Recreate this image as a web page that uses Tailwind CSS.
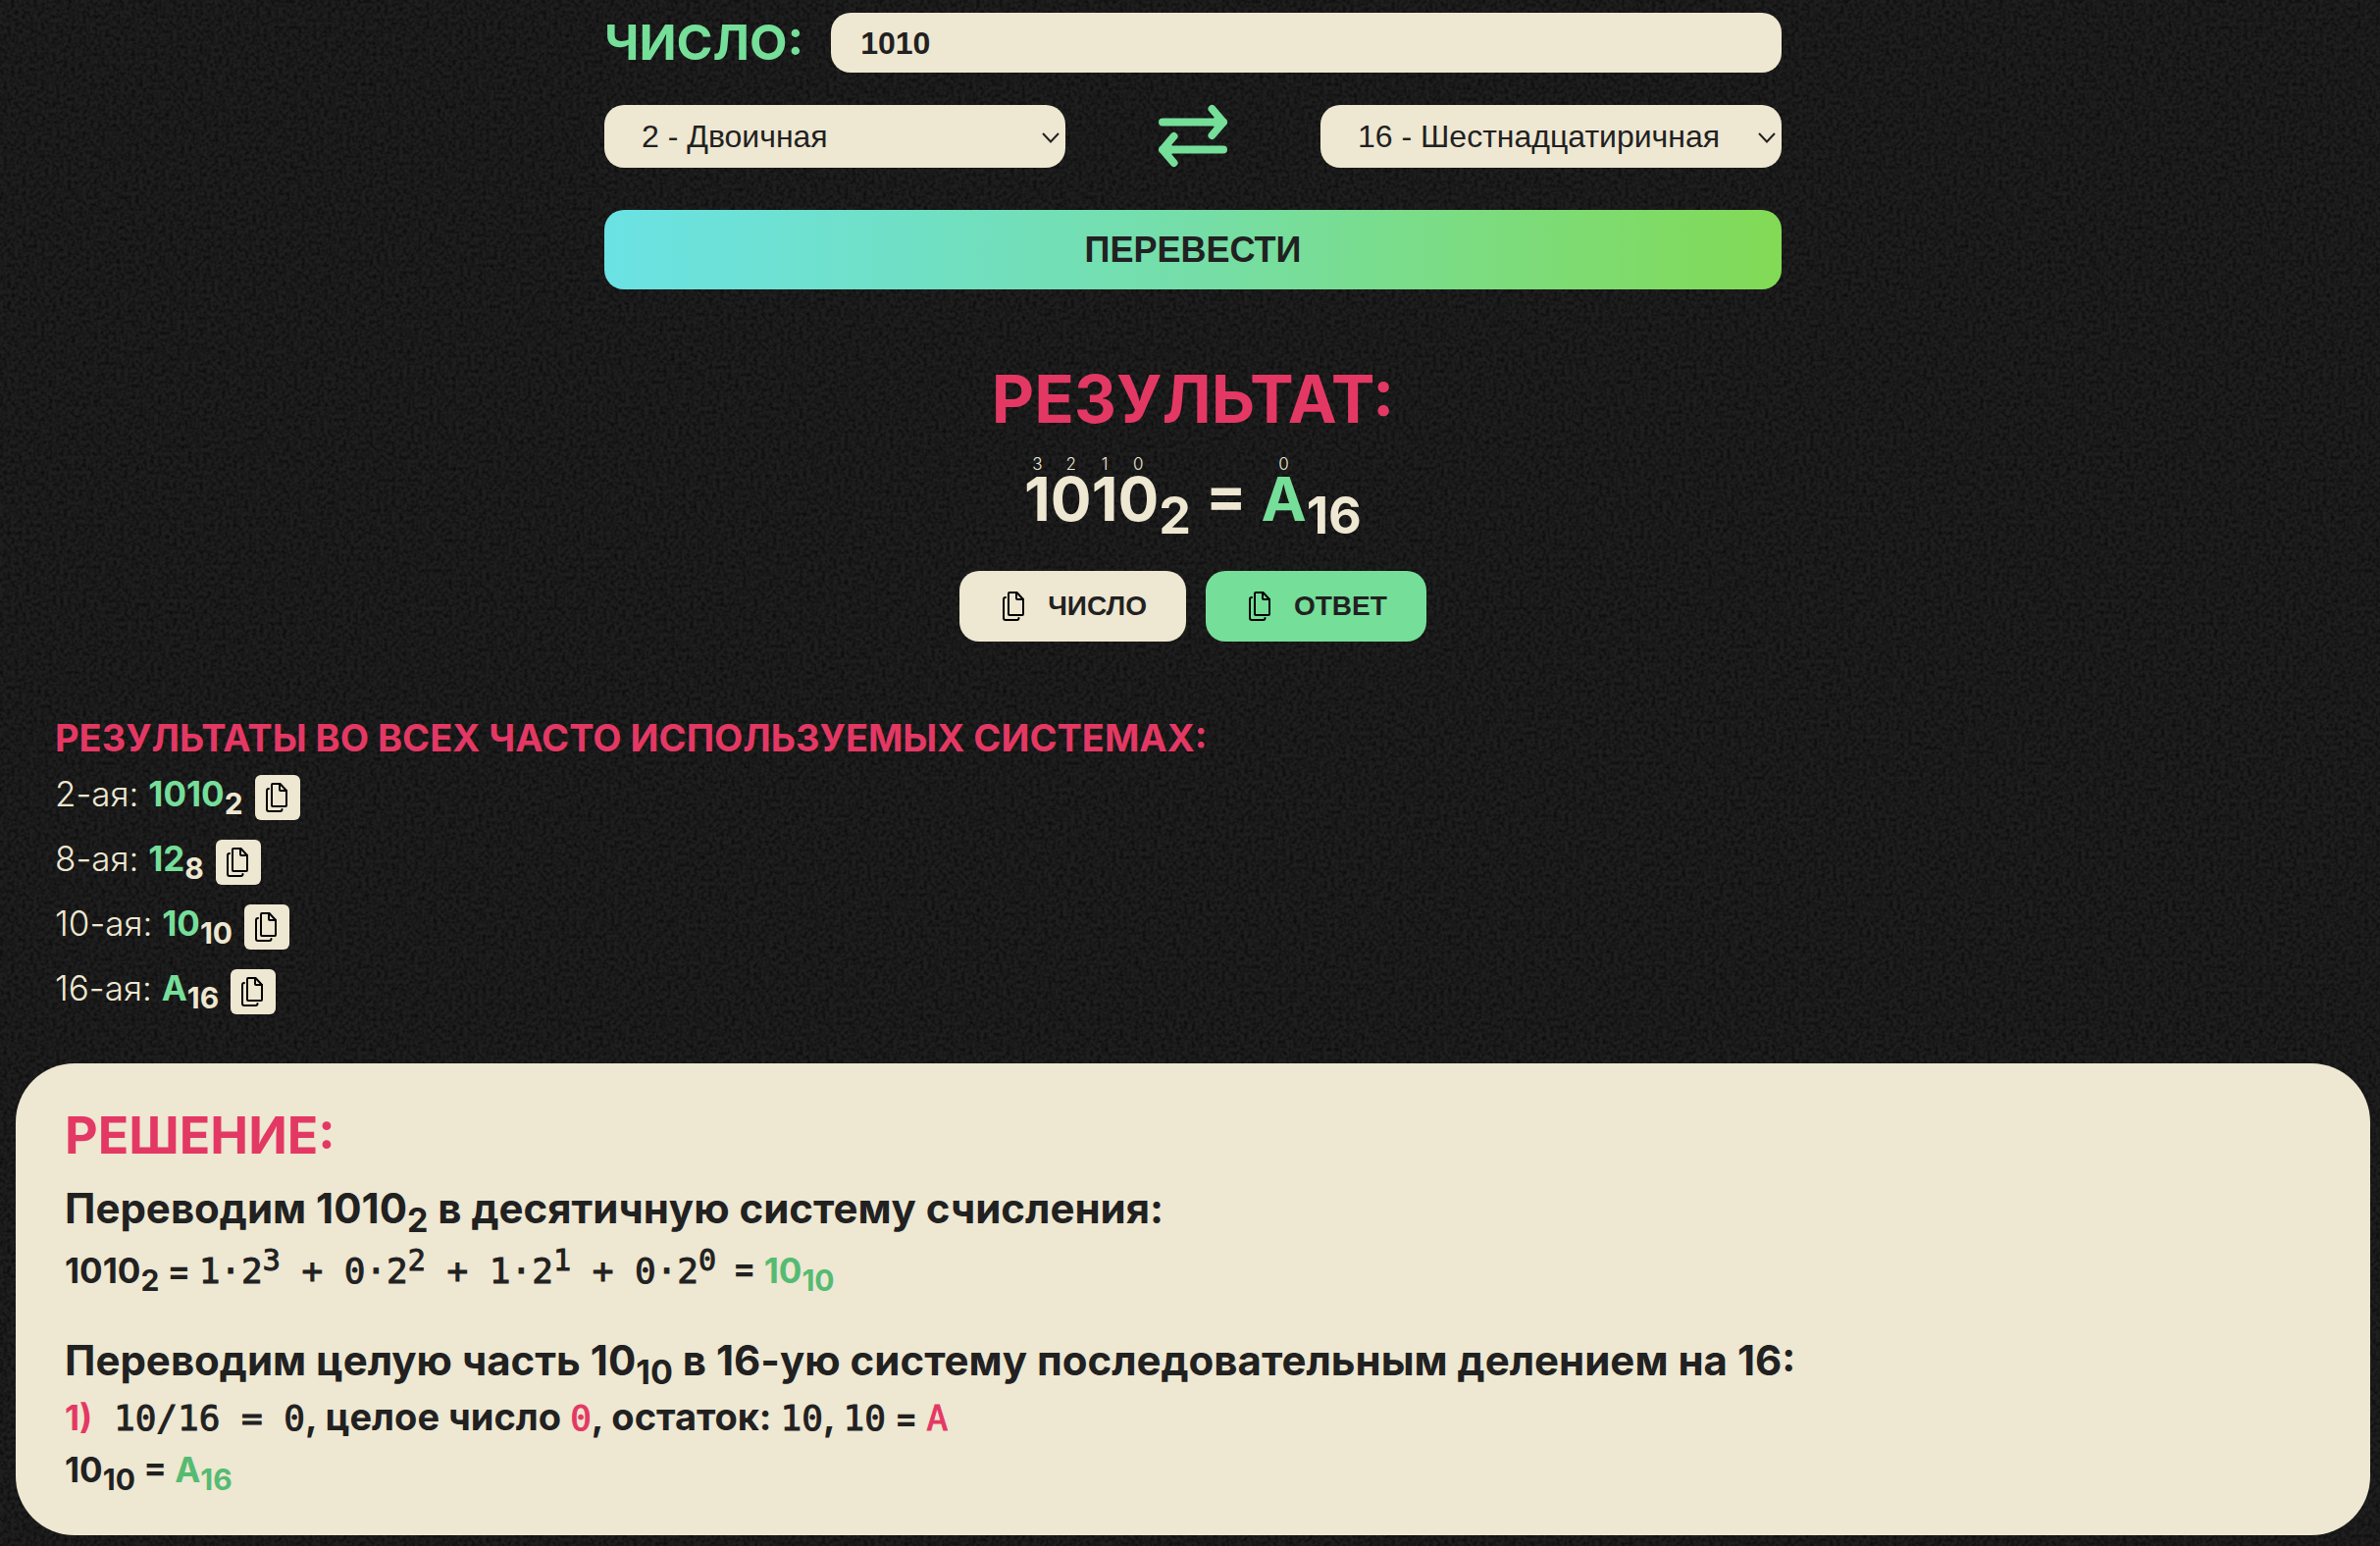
<!DOCTYPE html>
<html lang="ru">
<head>
<meta charset="utf-8">
<meta name="viewport" content="width=device-width, initial-scale=1">
<title>Перевод систем счисления</title>
<script src="https://cdn.jsdelivr.net/npm/@tailwindcss/browser@4"></script>
</head>
<body class="relative isolate min-h-screen overflow-x-hidden bg-[#1f1f1f] font-['Inter',sans-serif] text-[#eee7d1]">

<!-- grain over the dark background -->
<svg class="absolute inset-0 -z-10 h-full w-full" aria-hidden="true">
  <filter id="grain" x="0" y="0" width="100%" height="100%" color-interpolation-filters="sRGB">
    <feTurbulence type="fractalNoise" baseFrequency="0.26" numOctaves="2" seed="4" stitchTiles="stitch"/>
    <feColorMatrix values="0 0 0 0 0  0 0 0 0 0  0 0 0 0 0  1.2 0 0 0 -0.42"/>
  </filter>
  <rect width="100%" height="100%" filter="url(#grain)"/>
</svg>

<svg class="hidden" aria-hidden="true">
  <symbol id="copy" viewBox="0 0 32 32">
    <g fill="none" stroke="#000" stroke-width="2" stroke-linejoin="round" stroke-linecap="round">
      <path d="M11 2H18.500L25 9V24a1 1 0 0 1-1 1H11a1 1 0 0 1-1-1V3a1 1 0 0 1 1-1Z"/>
      <path d="M18 2V8a1 1 0 0 0 1 1H25"/>
      <path d="M7 7a2 2 0 0 0-2 2V28a2 2 0 0 0 2 2H18.500a2 2 0 0 0 2-2"/>
    </g>
  </symbol>
</svg>

<main class="pt-[13px] pr-[10px] pb-[10px] pl-4">
  <form class="mx-auto max-w-[1200px]" onsubmit="return false">
    <div class="flex items-center gap-7">
      <label for="number" class="text-[50px] leading-[61px] font-bold text-[#75de99]">ЧИСЛО:</label>
      <input id="number" type="text" value="1010" class="h-[61px] min-w-0 flex-1 rounded-[20px] bg-[#eee7d1] px-[30px] pt-0.5 font-['Liberation_Sans',Arial,sans-serif] text-[32px] font-bold text-[#212121] outline-none">
    </div>

    <div class="mt-[33px] grid grid-cols-[470fr_260fr_470fr] items-center">
      <div class="relative">
        <select aria-label="Из системы" class="h-16 w-full appearance-none rounded-[20px] bg-[#eee7d1] pr-12 pl-[38px] font-['Liberation_Sans',Arial,sans-serif] text-[32px] text-[#212121]">
          <option>2 - Двоичная</option><option>16 - Шестнадцатиричная</option>
        </select>
        <svg class="pointer-events-none absolute top-7 right-1.5 h-3 w-[18px]" viewBox="0 0 18 12" fill="none" stroke="#212121" stroke-width="2" aria-hidden="true"><path d="M1 1L9 9.500L17 1"/></svg>
      </div>
      <button type="button" aria-label="Поменять местами" class="mx-auto block">
        <svg class="h-20 w-20 -my-2" viewBox="0 0 80 80" fill="none" stroke="#75de99" stroke-width="8" stroke-linecap="round" stroke-linejoin="round" aria-hidden="true">
          <path d="M9 25.500H71M59.500 12L71 25.500L59.500 39M65 23V28M71 53.500H9M20.500 40L9 53.500L20.500 67M15 51V56"/>
        </svg>
      </button>
      <div class="relative">
        <select aria-label="В систему" class="h-16 w-full appearance-none rounded-[20px] bg-[#eee7d1] pr-12 pl-[38px] font-['Liberation_Sans',Arial,sans-serif] text-[32px] text-[#212121]">
          <option>16 - Шестнадцатиричная</option><option>2 - Двоичная</option>
        </select>
        <svg class="pointer-events-none absolute top-7 right-1.5 h-3 w-[18px]" viewBox="0 0 18 12" fill="none" stroke="#212121" stroke-width="2" aria-hidden="true"><path d="M1 1L9 9.500L17 1"/></svg>
      </div>
    </div>

    <button type="submit" class="mt-[43px] block h-[81px] w-full rounded-[20px] bg-[linear-gradient(90deg,#6ae2e4,#75dea8_50%,#82da55)] font-['Liberation_Sans',Arial,sans-serif] text-[36px] font-bold text-[#212121]">ПЕРЕВЕСТИ</button>
  </form>

  <section class="mt-[76px] text-center">
    <h2 class="text-[67px] leading-[72px] font-bold text-[#e43864]">РЕЗУЛЬТАТ:</h2>
    <p class="mt-[26px] text-[62px] leading-[80px] font-bold whitespace-nowrap"><span class="relative">1<span class="absolute -top-2 left-0 w-full text-[17px] leading-5 font-light">3</span></span><span class="relative">0<span class="absolute -top-2 left-0 w-full text-[17px] leading-5 font-light">2</span></span><span class="relative">1<span class="absolute -top-2 left-0 w-full text-[17px] leading-5 font-light">1</span></span><span class="relative">0<span class="absolute -top-2 left-0 w-full text-[17px] leading-5 font-light">0</span></span><sub class="static align-sub text-[52px] leading-[0]">2</sub> = <span class="relative text-[#75de99]">A<span class="absolute -top-2 left-0 w-full text-[17px] leading-5 font-light text-[#eee7d1]">0</span></span><sub class="static align-sub text-[52px] leading-[0]">16</sub></p>
    <div class="mt-[33px] flex justify-center gap-5 font-['Liberation_Sans',Arial,sans-serif] text-[28px] font-bold text-[#212121]">
      <button type="button" class="flex h-[72px] items-center gap-[18px] rounded-[20px] bg-[#eee7d1] px-10"><svg class="size-8" aria-hidden="true"><use href="#copy"/></svg>ЧИСЛО</button>
      <button type="button" class="flex h-[72px] items-center gap-[18px] rounded-[20px] bg-[#75de99] px-10"><svg class="size-8" aria-hidden="true"><use href="#copy"/></svg>ОТВЕТ</button>
    </div>
  </section>

  <section class="mt-[74px] pl-10">
    <h3 class="text-[38px] leading-[48px] font-bold text-[#e43864]">РЕЗУЛЬТАТЫ ВО ВСЕХ ЧАСТО ИСПОЛЬЗУЕМЫХ СИСТЕМАХ:</h3>
    <ul class="mt-[4px] text-[35px] font-light">
      <li class="flex h-[66px] items-center gap-3"><span class="pb-2">2-ая: <b class="font-bold text-[#75de99]">1010</b><sub class="static align-sub text-[30px] leading-[0] font-bold">2</sub></span><button type="button" aria-label="Копировать" class="flex size-[46px] items-center justify-center rounded-md bg-[#eee7d1]"><svg class="size-8" aria-hidden="true"><use href="#copy"/></svg></button></li>
      <li class="flex h-[66px] items-center gap-3"><span class="pb-2">8-ая: <b class="font-bold text-[#75de99]">12</b><sub class="static align-sub text-[30px] leading-[0] font-bold">8</sub></span><button type="button" aria-label="Копировать" class="flex size-[46px] items-center justify-center rounded-md bg-[#eee7d1]"><svg class="size-8" aria-hidden="true"><use href="#copy"/></svg></button></li>
      <li class="flex h-[66px] items-center gap-3"><span class="pb-2">10-ая: <b class="font-bold text-[#75de99]">10</b><sub class="static align-sub text-[30px] leading-[0] font-bold">10</sub></span><button type="button" aria-label="Копировать" class="flex size-[46px] items-center justify-center rounded-md bg-[#eee7d1]"><svg class="size-8" aria-hidden="true"><use href="#copy"/></svg></button></li>
      <li class="flex h-[66px] items-center gap-3"><span class="pb-2">16-ая: <b class="font-bold text-[#75de99]">A</b><sub class="static align-sub text-[30px] leading-[0] font-bold">16</sub></span><button type="button" aria-label="Копировать" class="flex size-[46px] items-center justify-center rounded-md bg-[#eee7d1]"><svg class="size-8" aria-hidden="true"><use href="#copy"/></svg></button></li>
    </ul>
  </section>

  <section class="mt-10 rounded-[60px] bg-[#eee7d1] px-[50px] pt-11 pb-10 font-bold text-[#212121]">
    <h2 class="text-[52px] leading-[60px] text-[#e43864]">РЕШЕНИЕ:</h2>
    <h3 class="mt-[14px] text-[42px] leading-[60px]">Переводим 1010<sub class="static align-sub text-[34px] leading-[0]">2</sub> в десятичную систему счисления:</h3>
    <p class="mt-[6px] text-[35px] leading-[54px]">1010<sub class="static align-sub text-[30px] leading-[0]">2</sub> = <span class="font-['DejaVu_Sans_Mono',monospace] text-[36px] leading-[0] font-normal whitespace-pre [-webkit-text-stroke:1px]">1·2<sup class="static align-super text-[30px] leading-[0]">3</sup> + 0·2<sup class="static align-super text-[30px] leading-[0]">2</sup> + 1·2<sup class="static align-super text-[30px] leading-[0]">1</sup> + 0·2<sup class="static align-super text-[30px] leading-[0]">0</sup></span> &nbsp;= <span class="text-[#55bb72]">10<sub class="static align-sub text-[30px] leading-[0]">10</sub></span></p>
    <h3 class="mt-[35px] text-[42px] leading-[60px]">Переводим целую часть 10<sub class="static align-sub text-[34px] leading-[0]">10</sub> в 16-ую систему последовательным делением на 16:</h3>
    <p class="text-[38px] leading-[54px]"><span class="text-[35px] leading-[0] text-[#e43864]">1)</span><span class="font-['DejaVu_Sans_Mono',monospace] text-[36px] leading-[0] font-normal whitespace-pre [-webkit-text-stroke:1px]"> 10/16 = 0</span>, целое число <span class="font-['DejaVu_Sans_Mono',monospace] text-[36px] leading-[0] font-normal text-[#e43864] [-webkit-text-stroke:1px]">0</span>, остаток: <span class="font-['DejaVu_Sans_Mono',monospace] text-[36px] leading-[0] font-normal [-webkit-text-stroke:1px]">10</span>, <span class="font-['DejaVu_Sans_Mono',monospace] text-[36px] leading-[0] font-normal [-webkit-text-stroke:1px]">10</span> <span class="text-[35px] leading-[0]">=</span> <span class="font-['DejaVu_Sans_Mono',monospace] text-[36px] leading-[0] font-normal text-[#e43864] [-webkit-text-stroke:1px]">A</span></p>
    <p class="text-[35px] leading-[54px]">10<sub class="static align-sub text-[30px] leading-[0]">10</sub> = <span class="text-[#55bb72]">A<sub class="static align-sub text-[30px] leading-[0]">16</sub></span></p>
  </section>
</main>
</body>
</html>
